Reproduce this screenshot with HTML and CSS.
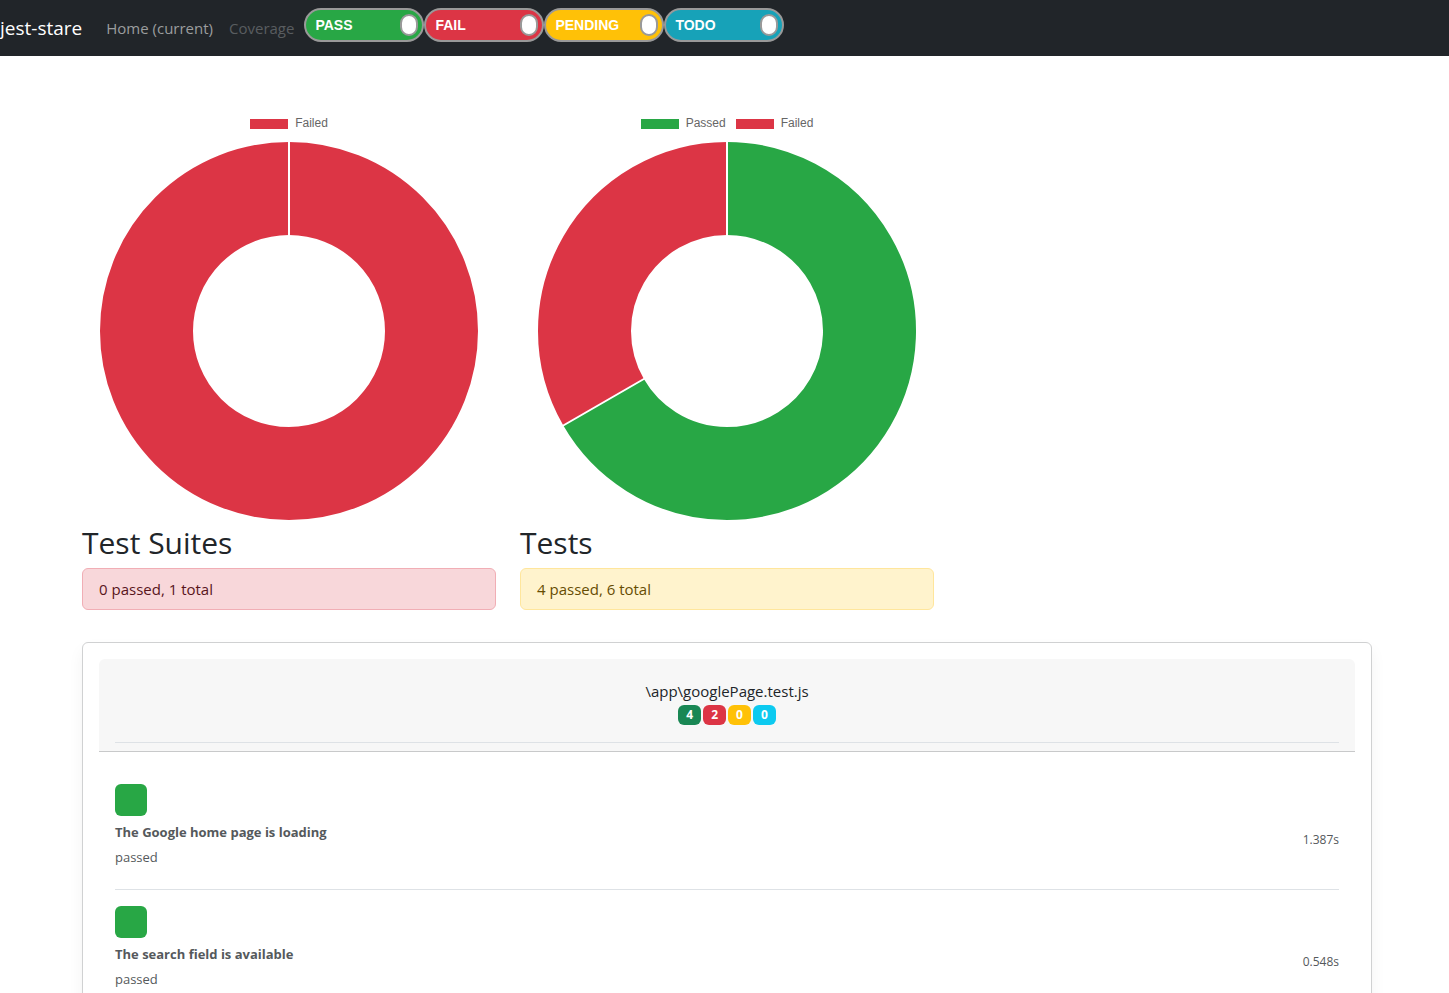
FILE: index.html
```html
<!DOCTYPE html>
<html lang="en">
<head>
<meta charset="utf-8">
<meta name="viewport" content="width=device-width, initial-scale=1">
<title>jest-stare</title>
<link rel="stylesheet" href="styles.css">
</head>
<body>
<nav class="navbar">
  <a class="brand" href="#">jest-stare</a>
  <a class="nav-link" href="#">Home (current)</a>
  <a class="nav-link disabled" href="#" aria-disabled="true">Coverage</a>
  <div class="switches">
    <label class="switch pass"><span>PASS</span><input type="checkbox" checked></label>
    <label class="switch fail"><span>FAIL</span><input type="checkbox" checked></label>
    <label class="switch pending"><span>PENDING</span><input type="checkbox" checked></label>
    <label class="switch todo"><span>TODO</span><input type="checkbox" checked></label>
  </div>
</nav>
<main class="container">
  <div class="summary">
    <section>
      <div class="legend">
        <span class="legend-item"><i class="swatch fail"></i>Failed</span>
      </div>
      <svg class="chart" viewBox="0 0 414 380" role="img" aria-label="Test suites: 1 failed">
        <circle class="arc-fail" cx="207" cy="190" r="142.5"/>
        <path class="divider" d="M207 96V0"/>
      </svg>
      <h2>Test Suites</h2>
      <div class="alert danger">0 passed, 1 total</div>
    </section>
    <section>
      <div class="legend">
        <span class="legend-item"><i class="swatch pass"></i>Passed</span>
        <span class="legend-item"><i class="swatch fail"></i>Failed</span>
      </div>
      <svg class="chart" viewBox="0 0 414 380" role="img" aria-label="Tests: 4 passed, 2 failed">
        <path class="arc-pass" d="M207 47.5A142.5 142.5 0 1 1 83.59 261.25"/>
        <path class="arc-fail" d="M83.59 261.25A142.5 142.5 0 0 1 207 47.5"/>
        <path class="divider" d="M207 96V0M124.7 237.5L42.4 285"/>
      </svg>
      <h2>Tests</h2>
      <div class="alert warning">4 passed, 6 total</div>
    </section>
  </div>
  <section class="card">
    <header class="card-header">
      <div class="suite">
        <a class="suite-name" href="#">\app\googlePage.test.js</a>
        <div class="badges">
          <span class="badge success">4</span>
          <span class="badge fail">2</span>
          <span class="badge pending">0</span>
          <span class="badge info">0</span>
        </div>
      </div>
    </header>
    <div class="tests">
      <article class="test">
        <div class="marker"></div>
        <div class="test-body">
          <div><strong>The Google home page is loading</strong><p>passed</p></div>
          <span class="time">1.387s</span>
        </div>
      </article>
      <article class="test">
        <div class="marker"></div>
        <div class="test-body">
          <div><strong>The search field is available</strong><p>passed</p></div>
          <span class="time">0.548s</span>
        </div>
      </article>
    </div>
  </section>
</main>
</body>
</html>
```
FILE: styles.css
```css
* { box-sizing: border-box; }

body {
  margin: 0;
  background: #fff;
  color: #212529;
  font: 15px/24px "Segoe UI", "Open Sans", "Noto Sans", sans-serif;
}

a { color: inherit; text-decoration: none; }

.navbar {
  display: flex;
  align-items: center;
  height: 56px;
  background: #212529;
}

.brand {
  margin-right: 16px;
  color: #fff;
  font-size: 19px;
  white-space: nowrap;
}

.nav-link {
  padding: 8px;
  color: #9b9d9e;
  white-space: nowrap;
}

.nav-link.disabled { color: #595d60; }

.switches {
  display: flex;
  align-self: flex-start;
  padding: 8px 0 0 2px;
}

.switch {
  display: flex;
  align-items: center;
  justify-content: space-between;
  width: 120px;
  height: 34px;
  padding: 0 4px 0 9px;
  border: 2px solid #999;
  border-radius: 20px;
  color: #fff;
  font: bold 14px "Liberation Sans", Arial, sans-serif;
  cursor: pointer;
}

.switch input {
  appearance: none;
  width: 18px;
  height: 22px;
  margin: 0;
  border: 2px solid #999;
  border-radius: 20px;
  background: #fff;
  cursor: pointer;
}

.pass { background: #28a745; }
.fail { background: #dc3545; }
.pending { background: #ffc107; }
.todo { background: #17a2b8; }
.success { background: #198754; }
.info { background: #0dcaf0; }

.container {
  padding: 56px 77px 0 82px;
}

.summary {
  display: grid;
  grid-template-columns: repeat(3, 1fr);
  gap: 24px;
}

.legend {
  display: flex;
  justify-content: center;
  gap: 10px;
  height: 29px;
  padding-top: 5px;
  color: #666;
  font: 12px/12px "Liberation Sans", Arial, sans-serif;
}

.legend-item {
  display: flex;
  gap: 7px;
}

.swatch {
  width: 38px;
  height: 10px;
  margin-top: 2px;
}

.chart {
  display: block;
  width: 100%;
  fill: none;
}

.arc-pass { stroke: #28a745; stroke-width: 93; }
.arc-fail { stroke: #dc3545; stroke-width: 93; }
.divider { stroke: #fff; stroke-width: 2; }

h2 {
  margin: 3px 0 6px;
  font-size: 30px;
  line-height: 38px;
  font-weight: 500;
}

.alert {
  padding: 8px 16px;
  border: 1px solid;
  border-radius: 6px;
}

.danger { background: #f8d7da; border-color: #f1aeb5; color: #58151c; }
.warning { background: #fff3cd; border-color: #ffe69c; color: #664d03; }

.card {
  margin-top: 32px;
  padding: 16px;
  border: 1px solid #d0d1d2;
  border-radius: 6px;
  box-shadow: 0 8px 16px rgba(0, 0, 0, 0.05);
}

.card-header {
  padding: 8px 16px;
  border-bottom: 1px solid #c8c9ca;
  border-radius: 6px 6px 0 0;
  background: #f7f7f7;
}

.suite {
  padding: 12px 0 17px;
  border-bottom: 1px solid #dee2e6;
  text-align: center;
}

.suite-name { display: block; }

.badges {
  display: flex;
  justify-content: center;
  gap: 2px;
  padding-top: 2px;
}

.badge {
  padding: 0 8px;
  border-radius: 6px;
  color: #fff;
  font-size: 12px;
  line-height: 20px;
  font-weight: 700;
}

.tests { padding: 16px; }

.test {
  padding: 16px 0;
  border-bottom: 1px solid #dee2e6;
  color: #55595c;
}

.marker {
  width: 32px;
  height: 32px;
  border-radius: 6px;
  background: #28a745;
}

.test-body {
  display: flex;
  align-items: center;
  justify-content: space-between;
  height: 57px;
  font-size: 13px;
  line-height: 25px;
}

.test-body p { margin: 0; }

.time {
  align-self: flex-start;
  padding-top: 11px;
  font-size: 12px;
}
```
